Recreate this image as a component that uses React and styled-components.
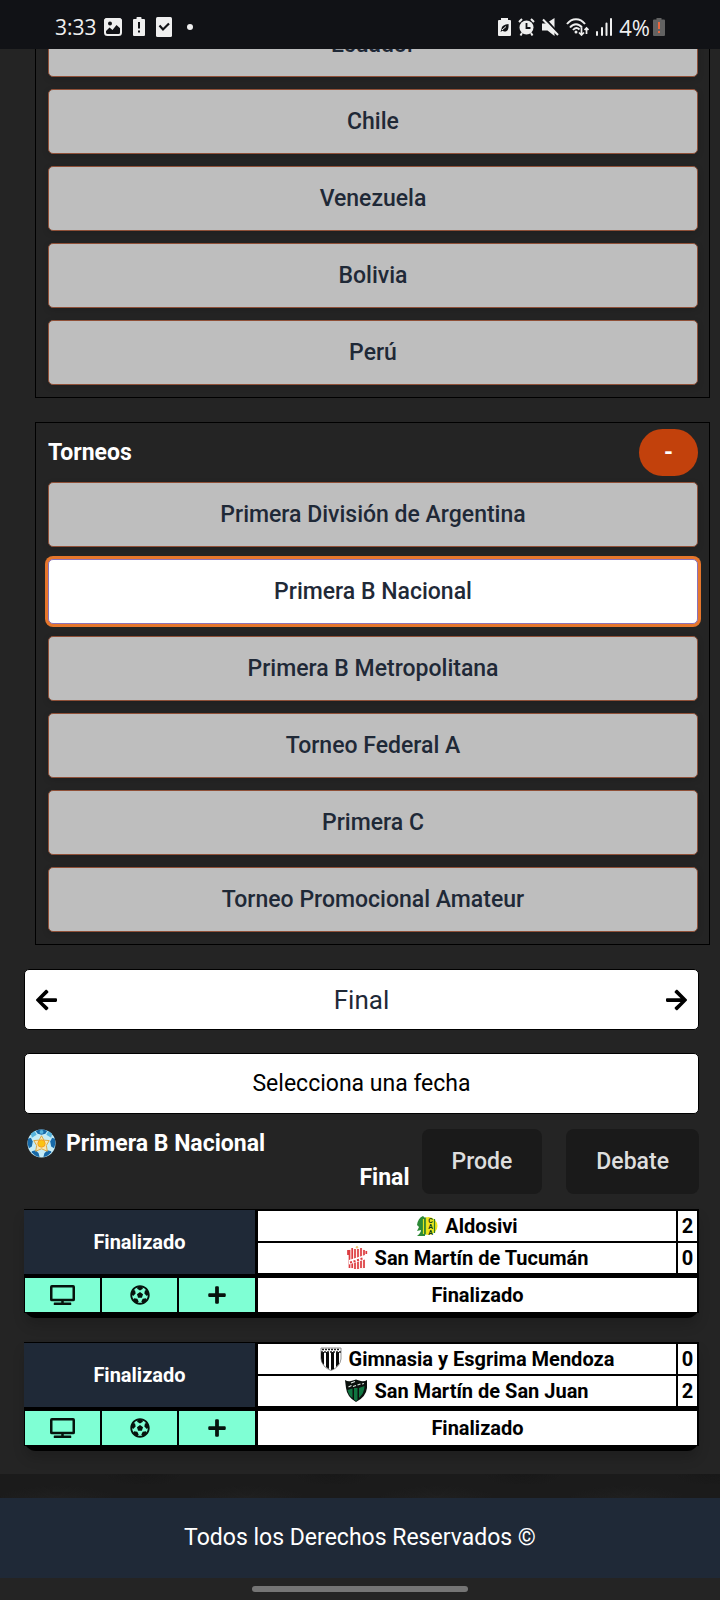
import React from "react";
import styled, { createGlobalStyle } from "styled-components";
import { FaArrowLeft, FaArrowRight, FaFutbol, FaPlus, FaTv } from "react-icons/fa";

const GlobalStyle = createGlobalStyle`
  * { box-sizing: border-box; }
  body {
    margin: 0;
    background-color: #1b1b1b;
    background-image:
      radial-gradient(ellipse 60px 14px at 30% 30%, #202020, transparent),
      radial-gradient(ellipse 40px 20px at 75% 70%, #171717, transparent);
    background-size: 190px 53px;
    color: #fff;
    font-family: Roboto, sans-serif;
    font-size: 23px;
    line-height: 36px;
  }
  button { font-family: inherit; font-size: inherit; line-height: inherit; margin: 0; padding: 0; cursor: pointer; }
`;

const StatusBar = styled.header`
  position: fixed;
  z-index: 5;
  inset: 0 0 auto 0;
  height: 49px;
  padding: 4px 55px 0 55px;
  display: flex;
  justify-content: space-between;
  align-items: center;
  background: #111216;
  color: #efefef;
  font-family: "Open Sans", sans-serif;
  font-size: 21px;
  line-height: 28px;
`;

const StatusGroup = styled.div`
  display: flex;
  align-items: center;
  gap: ${(p) => p.$gap}px;
  svg { display: block; }
`;

const Dot = styled.i`
  width: 6px;
  height: 6px;
  margin-left: 4px;
  border-radius: 50%;
  background: #efefef;
`;

const Battery = styled.span`
  display: flex;
  align-items: center;
  gap: 3px;
  font-size: 22px;
`;

const Main = styled.main`
  padding-bottom: 23px;
  background: #242424;
`;

const Panel = styled.section`
  margin: 0 10px 24px 35px;
  padding: ${(p) => (p.$open ? "12px" : "6px")} 11px 12px 12px;
  border: 1px solid #000;
  border-top-width: ${(p) => (p.$open ? "0" : "1px")};
`;

const PanelHead = styled.div`
  display: flex;
  justify-content: space-between;
  align-items: center;
  margin-bottom: 6px;
`;

const PanelTitle = styled.h2`
  margin: 0;
  font-size: 23px;
  font-weight: 700;
`;

const Toggle = styled.button`
  width: 59px;
  height: 47px;
  border: 0;
  border-radius: 24px;
  background: #c2410c;
  color: #fff;
  font-weight: 700;
`;

const OptionList = styled.div`
  display: flex;
  flex-direction: column;
  gap: 12px;
`;

const Option = styled.button`
  height: 65px;
  border: 1px solid ${(p) => (p.$selected ? "#8a72b8" : "#8f5038")};
  border-radius: 5px;
  background: ${(p) => (p.$selected ? "#fff" : "#bebebe")};
  box-shadow: ${(p) => (p.$selected ? "0 0 0 3px #e6762c" : "0 2px 6px rgba(0, 0, 0, 0.15)")};
  color: #1f2937;
  font-weight: 500;
`;

const Selectors = styled.div`
  display: grid;
  gap: 23px;
  margin: 0 21px 15px 24px;
`;

const Stepper = styled.div`
  display: flex;
  justify-content: space-between;
  align-items: center;
  height: 61px;
  padding: 0 11px;
  border: 1px solid #000;
  border-radius: 5px;
  background: #fff;
  color: #1f2937;
  font-size: 26px;
`;

const StepButton = styled.button`
  display: flex;
  border: 0;
  background: none;
  color: #000;
  font-size: 24px;
  svg { width: 21px; height: 24px; }
`;

const DateButton = styled.button`
  height: 61px;
  border: 1px solid #000;
  border-radius: 5px;
  background: #fff;
  color: #000;
`;

const LeagueHead = styled.div`
  display: flex;
  margin: 0 21px 15px 24px;
`;

const LeagueName = styled.div`
  flex: 1;
  display: flex;
  flex-direction: column;
  justify-content: space-between;
  height: 65px;
  padding: 0 12px 0 3px;
`;

const LeagueTitle = styled.h2`
  display: flex;
  align-items: center;
  gap: 10px;
  margin: 0;
  height: 29px;
  font-size: 23px;
  font-weight: 700;
`;

const Stage = styled.span`
  align-self: flex-end;
  line-height: 32px;
  font-weight: 700;
`;

const ActionButton = styled.button`
  height: 65px;
  padding: 0 30px;
  border: 0;
  border-radius: 8px;
  background: #1a1a1a;
  color: #dedede;
  font-weight: 500;
  & + & { margin-left: 24px; }
`;

const MatchCard = styled.div`
  margin: 0 21px 0 24px;
  padding-bottom: 5px;
  border-radius: 0 0 12px 12px;
  background: #000;
  box-shadow: 0 8px 12px rgba(0, 0, 0, 0.15);
  & + & { margin-top: 24px; }
`;

const MatchTable = styled.table`
  width: 100%;
  table-layout: fixed;
  border-spacing: 0;
  font-size: 20px;
  line-height: 28px;
  font-weight: 700;
  text-align: center;
  color: #000;
`;

const Cell = styled.td`
  height: ${(p) => p.$height}px;
  padding: 0;
  border: 0 solid #000;
  border-width: ${(p) => p.$edges};
  background: ${(p) => p.$fill || "#fff"};
`;

const StateCell = styled(Cell)`
  color: #fff;
`;

const Team = styled.span`
  display: flex;
  justify-content: center;
  align-items: center;
  gap: 7px;
  svg { display: block; width: 22px; height: 24px; }
`;

const IconButton = styled.button`
  display: flex;
  justify-content: center;
  align-items: center;
  width: 100%;
  height: 30px;
  border: 0;
  background: none;
  color: #06130d;
  font-size: 20px;
  svg { height: 20px; width: ${(p) => (p.$wide ? "25px" : "20px")}; }
`;

const Footer = styled.footer`
  margin-top: 24px;
  padding: 22px;
  background: #1f2937;
  text-align: center;
`;

const GestureBar = styled.div`
  display: flex;
  justify-content: center;
  align-items: center;
  height: 22px;
  background: #242424;
  &::before {
    content: "";
    width: 30%;
    height: 6px;
    border-radius: 3px;
    background: #757575;
  }
`;

const PictureIcon = () => (
  <svg width="18" height="18" viewBox="0 0 18 18">
    <rect x="1" y="1" width="16" height="16" rx="2.5" fill="none" stroke="#efefef" strokeWidth="2" />
    <path d="M0 9V3a3 3 0 0 1 3-3h12a3 3 0 0 1 3 3v9l-5.500-5-4 5-3-2.500L1 14z" fill="#efefef" />
    <circle cx="6" cy="5.500" r="2" fill="#111216" />
  </svg>
);

const AlertBatteryIcon = () => (
  <svg width="12" height="19" viewBox="0 0 12 19">
    <path d="M3.500 2V.8q0-.8.8-.8h3.400q.8 0 .8.800V2H11q1 0 1 1v15q0 1-1 1H1q-1 0-1-1V3q0-1 1-1z" fill="#efefef" />
    <path d="M6 5v6.500M6 13.500v2" stroke="#111216" strokeWidth="2" />
  </svg>
);

const CheckIcon = () => (
  <svg width="16" height="20" viewBox="0 0 16 20">
    <rect width="16" height="20" rx="1.500" fill="#efefef" />
    <path d="M3.500 8.500l3.500 4 6-6" fill="none" stroke="#111216" strokeWidth="2.200" />
  </svg>
);

const LeafBatteryIcon = () => (
  <svg width="13" height="18" viewBox="0 0 13 18">
    <path d="M3 2V0h7v2h2q1 0 1 1v14q0 1-1 1H1q-1 0-1-1V3q0-1 1-1z" fill="#efefef" />
    <path d="M10.500 6c.5 5-1 7.500-3.500 7.500-1 0-2-.3-2.500-.8L2.500 14l1-3C4 7.500 6.500 6.500 10.500 6z" fill="#111216" />
    <path d="M4 12l4-3.500" stroke="#efefef" strokeWidth="1" />
  </svg>
);

const AlarmIcon = () => (
  <svg width="17" height="18" viewBox="0 0 17 18">
    <circle cx="8.500" cy="9.500" r="7" fill="#efefef" />
    <path d="M1 4l3-3M16 4l-3-3M4 15l-1.500 2.500M13 15l1.500 2.500" stroke="#efefef" strokeWidth="2" />
    <path d="M8.500 5v5h4" fill="none" stroke="#111216" strokeWidth="1.800" />
  </svg>
);

const MuteIcon = () => (
  <svg width="17" height="18" viewBox="0 0 17 18">
    <path d="M0 5.500h4L12.500 0v18L5.500 12.500H0z" fill="#efefef" />
    <path d="M2.500 0L17 16" stroke="#111216" strokeWidth="2" />
    <path d="M1 1.500L16 17" stroke="#efefef" strokeWidth="2" />
  </svg>
);

const WifiIcon = () => (
  <svg width="23" height="18" viewBox="0 0 23 18">
    <g fill="none" stroke="#efefef" strokeWidth="2">
      <path d="M1 6C6-.5 14-.5 19 6M4 9.500c3.500-4.500 8.500-4.500 12 0M7 12c2-2.500 4.500-2.500 6.500-.5" />
      <path d="M15.500 9.500v7M13 14.500l2.500 2.500 2.500-2.500" strokeWidth="1.700" />
      <path d="M20.500 16v-6.500M18.500 12l2-2 2 2" strokeWidth="1.700" />
    </g>
    <circle cx="10" cy="14" r="1.500" fill="#efefef" />
  </svg>
);

const SignalIcon = () => (
  <svg width="16" height="18" viewBox="0 0 16 18">
    <path d="M1 14v3M6 10v7M10.500 5.500V17M15 1v16" stroke="#efefef" strokeWidth="2" strokeLinecap="round" />
  </svg>
);

const LowBatteryIcon = () => (
  <svg width="12" height="18" viewBox="0 0 12 18">
    <path d="M3.500 1.500V0h5v1.500H11q1 0 1 1V17q0 1-1 1H1q-1 0-1-1V2.500q0-1 1-1z" fill="#626262" />
    <path d="M6 4v7M6 13v2" stroke="#e8673f" strokeWidth="2" />
  </svg>
);

const LeagueBall = () => (
  <svg width="29" height="29" viewBox="0 0 30 30">
    <circle cx="15" cy="15" r="14.500" fill="#c6ecf7" />
    <g fill="#1769a8">
      <path d="M9 2q6-3 12 0l-2 3-4 1-4-1z" />
      <path d="M1 10q-1 5 1 10l3-2 1-5-2-4z" />
      <path d="M29 10q1 5-1 10l-3-2-1-5 2-4z" />
      <path d="M5 24q3 4 8 5l-1-4-3-3-4 1z" />
      <path d="M25 24q-3 4-8 5l1-4 3-3 4 1z" />
    </g>
    <g fill="#57b4de">
      <path d="M4 5l4-3 2 4-5 3zM26 5l-4-3-2 4 5 3z" />
      <circle cx="15" cy="3" r="2" />
    </g>
    <path d="M15 7l2.500 4.500 5.500.5-3 5 1 6-6-2.500L9 23l1-6-3-5 5.500-.5z" fill="#f4e6b6" stroke="#dca640" />
    <circle cx="15" cy="15" r="3.800" fill="#fbc313" stroke="#f49e26" />
  </svg>
);

const AldosiviCrest = () => (
  <svg viewBox="0 0 22 24">
    <circle cx="12.500" cy="12" r="9" fill="#efe51b" />
    <path d="M1 11Q2 4 7 2l2 2v18H1q4-3 4-6l-4 1 2-4z" fill="#2c8a36" />
    <path d="M7.500 5v15M10.500 3.500v17" stroke="#dfe51f" strokeWidth="1.200" />
    <path d="M9.200 3.500v17M18.500 5v14" stroke="#2c7a2b" strokeWidth="1.200" />
    <text x="14.500" y="9" fontSize="7" fontWeight="700" textAnchor="middle" fill="#0c3b1c">C</text>
    <text x="14.500" y="15" fontSize="7" fontWeight="700" textAnchor="middle" fill="#0c3b1c">A</text>
    <text x="14.500" y="21" fontSize="7" fontWeight="700" textAnchor="middle" fill="#0c3b1c">A</text>
  </svg>
);

const TucumanCrest = () => (
  <svg viewBox="0 0 22 24">
    <path d="M2 4l4-2q5 3 10 0l5 3-2 4v13q-8 3-16 0V9L1 7z" fill="#fff3f0" />
    <path d="M2 4v5M3.500 4v18M6.200 2v20M9 3v20M12 3v20M15 2v20M18 4v18M20.300 5v3" stroke="#dc3b40" strokeWidth="1.700" />
    <path d="M3 14l16-5v4.500L3 18.500z" fill="#fff" />
    <path d="M4 16.500l2-.5M7.500 15.500l2-.5M11 14.200l2-.5M14.500 13l2-.5" stroke="#dc3b40" strokeWidth="2" />
    <circle cx="11" cy="1.200" r="1.200" fill="#f2c777" />
  </svg>
);

const GimnasiaCrest = () => (
  <svg viewBox="0 0 22 24">
    <path d="M1 1h20v11q-1 8-10 11.500Q2 20 1 12z" fill="#fff" stroke="#777" strokeWidth=".8" />
    <path d="M1 5h3v13Q1 15 1 11zM6 5h3v17l-3-2zM11 5h3v17l-3 1zM16 5h3v12l-3 3z" fill="#0a0a0a" />
    <path d="M1 5h20M2 2.500h18" stroke="#222" strokeWidth="1.500" strokeDasharray="2 1" />
  </svg>
);

const SanJuanCrest = () => (
  <svg viewBox="0 0 22 24">
    <path d="M0 1q3 2 6 1 3-1 5-1.500Q13 1 16 2t6-1v8q-1 9-11 14Q2 18 1 9z" fill="#0b100d" />
    <path d="M2.500 11l5-1.500V19q-4-3-5-8zM9 9h3.500v12L11 22l-2-1.500zM14 9l5.500-2q0 7-5.500 12z" fill="#107540" />
    <path d="M6 4l4-1.500M3.500 8l3-1.500M8 7.500l3-1M12.500 6l3-1M17 5l2-.5" stroke="#dfe6e2" strokeWidth="1.200" />
  </svg>
);

const countries = ["Ecuador", "Chile", "Venezuela", "Bolivia", "Perú"];

const tournaments = [
  "Primera División de Argentina",
  "Primera B Nacional",
  "Primera B Metropolitana",
  "Torneo Federal A",
  "Primera C",
  "Torneo Promocional Amateur",
];

const matches = [
  [
    { name: "Aldosivi", goals: 2, Crest: AldosiviCrest },
    { name: "San Martín de Tucumán", goals: 0, Crest: TucumanCrest },
  ],
  [
    { name: "Gimnasia y Esgrima Mendoza", goals: 0, Crest: GimnasiaCrest },
    { name: "San Martín de San Juan", goals: 2, Crest: SanJuanCrest },
  ],
];

function TeamCells({ team, height, top, bottom }) {
  const { Crest, name, goals } = team;
  const edges = `${top}px 2px ${bottom}px 0`;
  return (
    <>
      <Cell $height={height} $edges={edges}>
        <Team><Crest />{name}</Team>
      </Cell>
      <Cell $height={height} $edges={edges}>{goals}</Cell>
    </>
  );
}

function Match({ home, away }) {
  const mint = "#7fffd4";
  return (
    <MatchCard>
      <MatchTable>
        <colgroup>
          <col width="78" /><col width="77" /><col width="79" /><col /><col width="21" />
        </colgroup>
        <tbody>
          <tr>
            <StateCell colSpan={3} rowSpan={2} $height={69} $edges="1px 3px 4px 0" $fill="#1f2937">Finalizado</StateCell>
            <TeamCells team={home} height={34} top={2} bottom={2} />
          </tr>
          <tr>
            <TeamCells team={away} height={35} top={0} bottom={5} />
          </tr>
          <tr>
            <Cell $height={35} $edges="0 2px 1px 1px" $fill={mint}>
              <IconButton $wide aria-label="Televisión"><FaTv /></IconButton>
            </Cell>
            <Cell $height={35} $edges="0 2px 1px 0" $fill={mint}>
              <IconButton aria-label="Goles"><FaFutbol /></IconButton>
            </Cell>
            <Cell $height={35} $edges="0 3px 1px 0" $fill={mint}>
              <IconButton aria-label="Más"><FaPlus /></IconButton>
            </Cell>
            <Cell colSpan={2} $height={35} $edges="0 2px 1px 0">Finalizado</Cell>
          </tr>
        </tbody>
      </MatchTable>
    </MatchCard>
  );
}

export default function App() {
  const [selected, setSelected] = React.useState("Primera B Nacional");
  return (
    <>
      <GlobalStyle />
      <StatusBar>
        <StatusGroup $gap={7}>
          <span>3:33</span>
          <StatusGroup $gap={11}>
            <PictureIcon />
            <AlertBatteryIcon />
            <CheckIcon />
            <Dot />
          </StatusGroup>
        </StatusGroup>
        <StatusGroup $gap={7}>
          <LeafBatteryIcon />
          <AlarmIcon />
          <MuteIcon />
          <WifiIcon />
          <SignalIcon />
          <Battery>4%<LowBatteryIcon /></Battery>
        </StatusGroup>
      </StatusBar>
      <Main>
        <Panel $open>
          <OptionList>
            {countries.map((name) => <Option key={name}>{name}</Option>)}
          </OptionList>
        </Panel>
        <Panel>
          <PanelHead>
            <PanelTitle>Torneos</PanelTitle>
            <Toggle>-</Toggle>
          </PanelHead>
          <OptionList>
            {tournaments.map((name) => (
              <Option key={name} $selected={name === selected} onClick={() => setSelected(name)}>{name}</Option>
            ))}
          </OptionList>
        </Panel>
        <Selectors>
          <Stepper>
            <StepButton aria-label="Anterior"><FaArrowLeft /></StepButton>
            <span>Final</span>
            <StepButton aria-label="Siguiente"><FaArrowRight /></StepButton>
          </Stepper>
          <DateButton>Selecciona una fecha</DateButton>
        </Selectors>
        <LeagueHead>
          <LeagueName>
            <LeagueTitle><LeagueBall />Primera B Nacional</LeagueTitle>
            <Stage>Final</Stage>
          </LeagueName>
          <ActionButton>Prode</ActionButton>
          <ActionButton>Debate</ActionButton>
        </LeagueHead>
        {matches.map(([home, away]) => <Match key={home.name} home={home} away={away} />)}
      </Main>
      <Footer>Todos los Derechos Reservados ©</Footer>
      <GestureBar />
    </>
  );
}
